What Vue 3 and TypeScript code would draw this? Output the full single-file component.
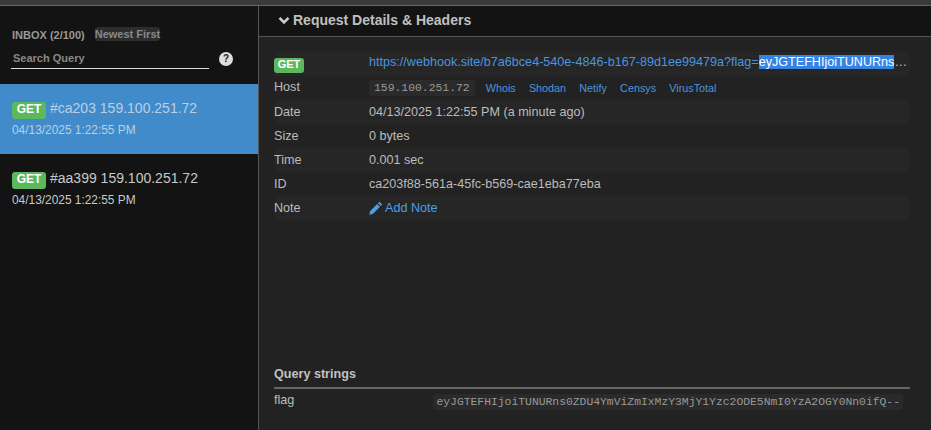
<script setup lang="ts">
interface Req { id: string; ip: string; date: string; active: boolean }
const requests: Req[] = [
  { id: '#ca203', ip: '159.100.251.72', date: '04/13/2025 1:22:55 PM', active: true },
  { id: '#aa399', ip: '159.100.251.72', date: '04/13/2025 1:22:55 PM', active: false },
]
const links = ['Whois', 'Shodan', 'Netify', 'Censys', 'VirusTotal']
</script>

<template>
  <div class="page">
    <div class="topbar"></div>
    <div class="body">
      <aside class="side">
        <div class="side-head">
          <div class="inbox-row">
            <span class="inbox">INBOX (2/100)</span>
            <span class="sort">Newest First</span>
          </div>
          <div class="search-row">
            <div class="search">Search Query</div>
            <span class="help">?</span>
          </div>
        </div>
        <div v-for="r in requests" :key="r.id" class="item" :class="{ active: r.active }">
          <div class="item-title">
            <span class="label">GET</span>
            <span class="item-text">{{ r.id }} {{ r.ip }}</span>
          </div>
          <div class="item-date">{{ r.date }}</div>
        </div>
      </aside>
      <main class="main">
        <header class="head">
          <svg class="chev" width="12" height="9" viewBox="0 0 12 9"><path d="M1.5 1.8 6 6.3l4.5-4.5" fill="none" stroke="#ccc" stroke-width="2.6"/></svg>
          <span>Request Details &amp; Headers</span>
        </header>
        <div class="content">
          <div class="table">
            <div class="row">
              <div class="key"><span class="label get-main">GET</span></div>
              <div class="val url"><span class="link">https://webhook.site/b7a6bce4-540e-4846-b167-89d1ee99479a?flag=</span><span class="sel">eyJGTEFHIjoiTUNURns</span><span>…</span></div>
            </div>
            <div class="row">
              <div class="key host-key">Host</div>
              <div class="val hostval">
                <code class="host">159.100.251.72</code>
                <span class="host-links"><span v-for="l in links" :key="l" class="link small">{{ l }}</span></span>
              </div>
            </div>
            <div class="row"><div class="key">Date</div><div class="val">04/13/2025 1:22:55 PM (a minute ago)</div></div>
            <div class="row"><div class="key">Size</div><div class="val">0 bytes</div></div>
            <div class="row"><div class="key">Time</div><div class="val">0.001 sec</div></div>
            <div class="row"><div class="key">ID</div><div class="val">ca203f88-561a-45fc-b569-cae1eba77eba</div></div>
            <div class="row">
              <div class="key">Note</div>
              <div class="val note">
                <svg width="13" height="13" viewBox="0 0 13 13"><path d="M0.3 12.7 1 9.2 8.2 2 11 4.8 3.8 12ZM9 1.2l.9-.9c.4-.3.9-.3 1.2 0l1.6 1.6c.3.3.3.8 0 1.2l-.9.9Z" fill="#4a9ee8"/></svg>
                <span class="add">Add Note</span>
              </div>
            </div>
          </div>
          <div class="query">
            <h4 class="query-title">Query strings</h4>
            <div class="query-row">
              <span class="q-key">flag</span>
              <code class="q-val">eyJGTEFHIjoiTUNURns0ZDU4YmViZmIxMzY3MjY1Yzc2ODE5NmI0YzA2OGY0Nn0ifQ--</code>
            </div>
          </div>
        </div>
      </main>
    </div>
  </div>
</template>

<style>
html, body { margin: 0; background: #222; }
</style>

<style scoped>
.page {
  width: 931px;
  height: 430px;
  overflow: hidden;
  display: flex;
  flex-direction: column;
  font-family: "Liberation Sans", Arial, sans-serif;
  font-size: 12.6px;
  color: #bcbcbc;
}
.topbar {
  height: 5px;
  flex: none;
  background: #3a3a3a;
  border-bottom: 1px solid #666;
}
.body { flex: 1; display: flex; min-height: 0; }
.side {
  width: 258px;
  flex: none;
  background: #131313;
  border-right: 1px solid #555;
}
.side-head { height: 78px; box-sizing: border-box; padding: 21px 12px 0; }
.inbox-row { display: flex; align-items: flex-start; gap: 10px; height: 24px; }
.inbox { font-size: 11px; font-weight: 700; color: #999; line-height: 17px; }
.sort {
  font-size: 11px;
  font-weight: 700;
  color: #888;
  background: #2d2d2d;
  border-radius: 3px;
  line-height: 14px;
}
.search-row { display: flex; align-items: flex-start; gap: 10px; }
.search {
  width: 198px;
  margin-left: -1px;
  padding-left: 2px;
  box-sizing: border-box;
  height: 18px;
  border-bottom: 1px solid #ddd;
  font-size: 11px;
  font-weight: 700;
  color: #888;
  line-height: 15px;
}
.help {
  width: 14px;
  height: 14px;
  margin-top: 1px;
  border-radius: 50%;
  background: #ddd;
  color: #222;
  font-size: 10px;
  font-weight: 700;
  line-height: 14px;
  text-align: center;
}
.item { height: 70px; box-sizing: border-box; padding: 18px 12px 0; color: #c8c8c8; }
.item.active { background: #428bca; color: #b9cfe3; }
.item-title { display: flex; align-items: flex-start; gap: 4px; height: 17px; }
.item-text { font-size: 14px; line-height: 17px; margin-top: -2px; }
.item-date { font-size: 11.9px; line-height: 17px; margin-top: 3px; }
.label {
  display: inline-block;
  background: #5cb85c;
  color: #fff;
  font-size: 12px;
  font-weight: 700;
  width: 34px;
  height: 17px;
  line-height: 15px;
  text-align: center;
  border-radius: 3px;
}
.main { flex: 1; background: #222; min-width: 0; }
.head {
  height: 31px;
  box-sizing: border-box;
  background: #131313;
  border-bottom: 1px solid #555;
  padding: 0 0 2px 19px;
  display: flex;
  align-items: center;
  gap: 3px;
  font-size: 14px;
  font-weight: 700;
  color: #c0c0c0;
}
.content { padding: 15px 21px 0 15px; }
.table { height: 313px; }
.row { display: flex; height: 24px; line-height: 24px; }
.row:nth-child(odd) { background: #262626; }
.key { width: 95px; flex: none; }
.host-key { line-height: 23px; }
.val { flex: 1; min-width: 0; }
.url { white-space: nowrap; line-height: 21px; overflow: hidden; }
.link { color: #4a95de; }
.sel { background: #3584e4; color: #fff; }
.get-main { margin-top: 6px; width: 30px; height: 15px; font-size: 11px; line-height: 12px; vertical-align: top; }
.hostval { display: flex; align-items: center; }
.host {
  font-family: "Liberation Mono", monospace;
  font-size: 11.4px;
  color: #999;
  background: #2a2a2a;
  border-radius: 3px;
  padding: 2px 5px;
  line-height: 12px;
}
.host-links { display: flex; gap: 13.2px; margin-left: 11px; }
.small { font-size: 10.8px; }
.note { display: flex; align-items: center; gap: 3px; }
.add { color: #4a9ee8; }
.query-title { margin: 0; font-size: 12.6px; font-weight: 700; color: #c0c0c0; line-height: 16px; padding: 1px 0 5px; border-bottom: 2px solid #666; }
.query-row { display: flex; justify-content: space-between; align-items: flex-start; padding: 1px 7px 0 0; line-height: 20px; }
.q-val {
  font-family: "Liberation Mono", monospace;
  font-size: 11.36px;
  color: #999;
  background: #2a2a2a;
  border-radius: 3px;
  padding: 2px 3px;
  line-height: 12px;
  margin-top: 4px;
}
</style>
